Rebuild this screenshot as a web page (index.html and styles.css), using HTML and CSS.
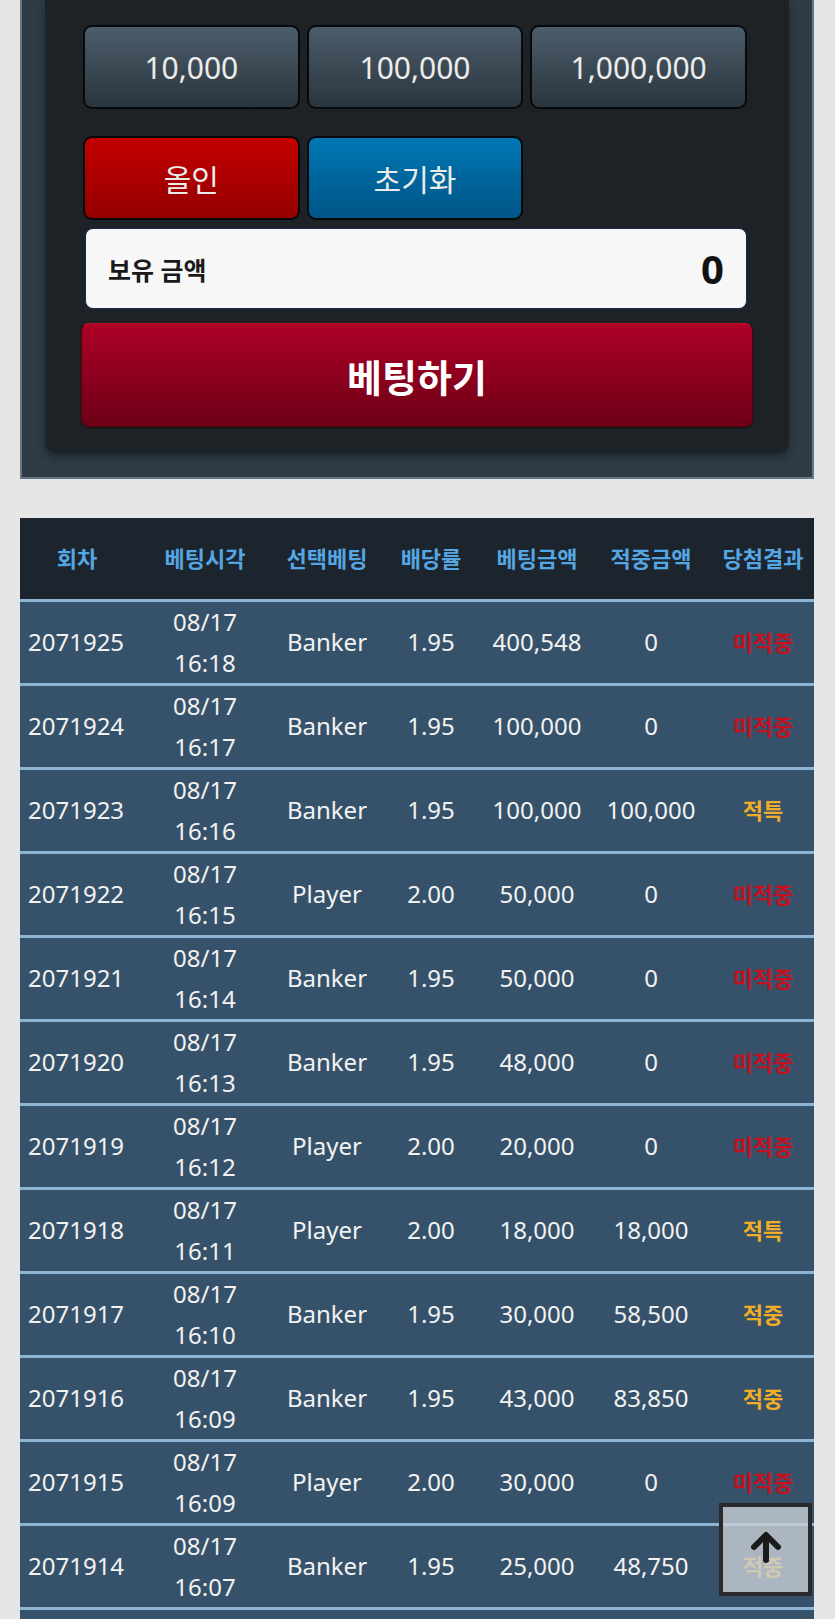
FILE: index.html
```html
<!DOCTYPE html>
<html lang="ko">
<head>
    <meta charset="UTF-8">
    <meta name="viewport" content="width=device-width, initial-scale=1.0">
    <title>베팅</title>
    <link rel="stylesheet" href="styles.css">
</head>
<body>
    <div class="bet-panel">
        <div class="bet-inner">
            <div class="chips">
                <button class="chip">10,000</button>
                <button class="chip">100,000</button>
                <button class="chip">1,000,000</button>
            </div>
            <div class="chips actions">
                <button class="chip allin">올인</button>
                <button class="chip reset">초기화</button>
            </div>
            <div class="balance">
                <span class="balance-label">보유 금액</span>
                <span class="balance-value">0</span>
            </div>
            <button class="bet-btn">베팅하기</button>
        </div>
    </div>

    <table class="history">
        <colgroup>
            <col style="width:114px">
            <col style="width:142px">
            <col style="width:102px">
            <col style="width:106px">
            <col style="width:106px">
            <col style="width:122px">
            <col style="width:102px">
        </colgroup>
        <thead>
            <tr>
                <th>회차</th>
                <th>베팅시각</th>
                <th>선택베팅</th>
                <th>배당률</th>
                <th>베팅금액</th>
                <th>적중금액</th>
                <th>당첨결과</th>
            </tr>
        </thead>
        <tbody>
            <tr><td>2071925</td><td>08/17<br>16:18</td><td>Banker</td><td>1.95</td><td>400,548</td><td>0</td><td class="miss">미적중</td></tr>
            <tr><td>2071924</td><td>08/17<br>16:17</td><td>Banker</td><td>1.95</td><td>100,000</td><td>0</td><td class="miss">미적중</td></tr>
            <tr><td>2071923</td><td>08/17<br>16:16</td><td>Banker</td><td>1.95</td><td>100,000</td><td>100,000</td><td class="hit">적특</td></tr>
            <tr><td>2071922</td><td>08/17<br>16:15</td><td>Player</td><td>2.00</td><td>50,000</td><td>0</td><td class="miss">미적중</td></tr>
            <tr><td>2071921</td><td>08/17<br>16:14</td><td>Banker</td><td>1.95</td><td>50,000</td><td>0</td><td class="miss">미적중</td></tr>
            <tr><td>2071920</td><td>08/17<br>16:13</td><td>Banker</td><td>1.95</td><td>48,000</td><td>0</td><td class="miss">미적중</td></tr>
            <tr><td>2071919</td><td>08/17<br>16:12</td><td>Player</td><td>2.00</td><td>20,000</td><td>0</td><td class="miss">미적중</td></tr>
            <tr><td>2071918</td><td>08/17<br>16:11</td><td>Player</td><td>2.00</td><td>18,000</td><td>18,000</td><td class="hit">적특</td></tr>
            <tr><td>2071917</td><td>08/17<br>16:10</td><td>Banker</td><td>1.95</td><td>30,000</td><td>58,500</td><td class="hit">적중</td></tr>
            <tr><td>2071916</td><td>08/17<br>16:09</td><td>Banker</td><td>1.95</td><td>43,000</td><td>83,850</td><td class="hit">적중</td></tr>
            <tr><td>2071915</td><td>08/17<br>16:09</td><td>Player</td><td>2.00</td><td>30,000</td><td>0</td><td class="miss">미적중</td></tr>
            <tr><td>2071914</td><td>08/17<br>16:07</td><td>Banker</td><td>1.95</td><td>25,000</td><td>48,750</td><td class="hit">적중</td></tr>
            <tr><td>2071913</td><td>08/17<br>16:06</td><td>Player</td><td>2.00</td><td>20,000</td><td>0</td><td class="miss">미적중</td></tr>
        </tbody>
    </table>

    <div class="to-top">
        <svg width="34" height="32" viewBox="0 0 34 32">
            <path d="M17 29 V5 M5 16 L17 4 L29 16" fill="none" stroke="#1b1b1b" stroke-width="6" stroke-linecap="round" stroke-linejoin="round"/>
        </svg>
    </div>
</body>
</html>
```

FILE: styles.css
```css
* {
    box-sizing: border-box;
}

body {
    margin: 0;
    background: #e6e6e6;
    font-family: "Noto Sans", "Noto Sans CJK KR", sans-serif;
}

.bet-panel {
    margin: 0 21px 0 20px;
    padding: 0 23px 24px;
    background: #2f3b45;
    border: 2px solid #667685;
    border-top: none;
}

.bet-inner {
    padding: 25px 42px 26px 38px;
    background: #1c2226;
    border-radius: 0 0 10px 10px;
    box-shadow: 0 4px 8px rgba(0,0,0,0.35);
}

.chips {
    display: grid;
    grid-template-columns: repeat(3, 1fr);
    gap: 7px;
}

.actions {
    margin-top: 27px;
}

.chip {
    height: 84px;
    font-family: inherit;
    font-size: 30px;
    color: #ececec;
    background: linear-gradient(#4c5d6a, #2a353e);
    border: 2px solid #07090b;
    border-radius: 9px;
    padding: 0;
}

.allin {
    background: linear-gradient(#c30000, #930000);
}

.reset {
    background: linear-gradient(#0077b3, #005587);
}

.balance {
    display: flex;
    justify-content: space-between;
    align-items: center;
    height: 81px;
    margin: 8px 0 0 2px;
    padding: 0 22px 0 22px;
    background: #f7f7f7;
    border: 1px solid #1a2850;
    border-radius: 8px;
}

.balance-label {
    font-size: 25px;
    font-weight: bold;
    color: #1a1a1a;
}

.balance-value {
    font-size: 40px;
    font-weight: bold;
    color: #111;
}

.bet-btn {
    display: block;
    width: calc(100% + 8px);
    height: 104px;
    margin: 14px -6px 0 -2px;
    font-family: inherit;
    font-size: 38px;
    font-weight: bold;
    color: #fff;
    background: linear-gradient(#ae0026, #6c0015);
    border: 1px solid #5a0010;
    border-top-color: #c4102c;
    border-radius: 8px;
    box-shadow: 0 1px 2px rgba(0,0,0,0.5);
}

.history {
    width: 794px;
    margin: 39px 21px 0 20px;
    border-collapse: separate;
    border-spacing: 0;
    table-layout: fixed;
}

.history th {
    padding: 0;
    line-height: 81px;
    font-size: 22px;
    font-weight: bold;
    color: #55a6e2;
    background: #1c252d;
    white-space: nowrap;
}

.history td {
    padding: 0;
    line-height: 40.5px;
    font-size: 24px;
    color: #f2f2f2;
    text-align: center;
    background: #36526a;
    border-top: 3px solid #8cb5d3;
    white-space: nowrap;
}

.history td:first-child {
    text-align: left;
    padding-left: 8px;
}

.history td.miss {
    font-size: 22px;
    font-weight: bold;
    color: #c5101f;
}

.history td.hit {
    font-size: 22px;
    font-weight: bold;
    color: #f0ae26;
}

.to-top {
    position: fixed;
    right: 23px;
    bottom: 23px;
    width: 93px;
    height: 93px;
    display: flex;
    align-items: center;
    justify-content: center;
    padding-bottom: 6px;
    background: rgba(202, 208, 214, 0.8);
    border: 4px solid #2a2a2a;
}
```
